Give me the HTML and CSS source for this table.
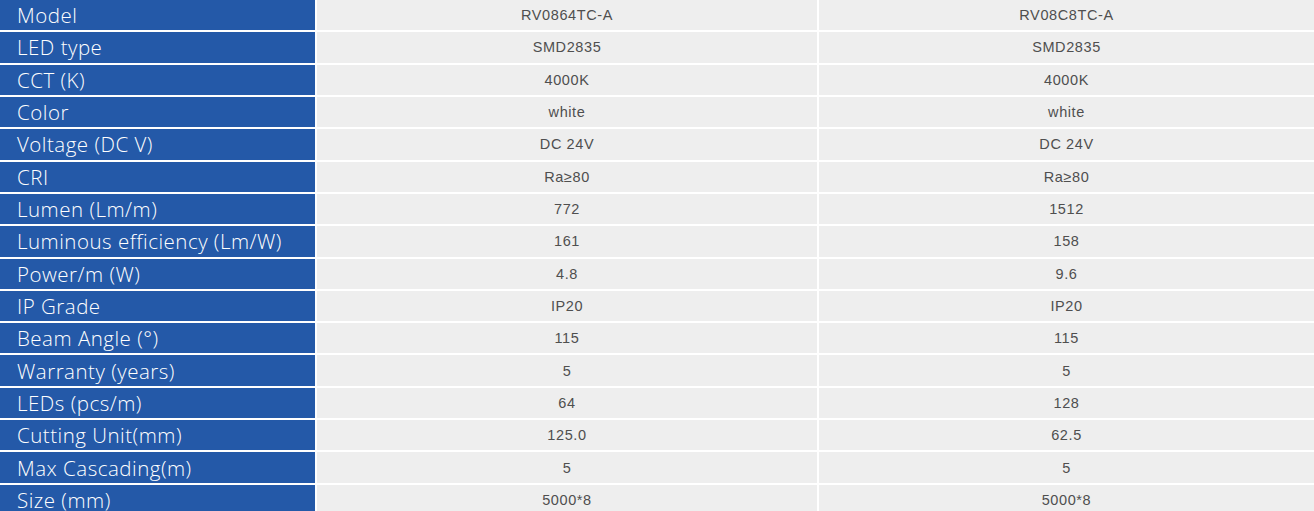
FILE: index.html
```html
<!DOCTYPE html>
<html lang="en">
<head>
<meta charset="utf-8">
<title>Specifications</title>
<link rel="stylesheet" href="styles.css">
</head>
<body>
<div class="spec-table">
  <div class="label">Model</div><div class="val">RV0864TC-A</div><div class="val">RV08C8TC-A</div>
  <div class="label">LED type</div><div class="val">SMD2835</div><div class="val">SMD2835</div>
  <div class="label">CCT (K)</div><div class="val">4000K</div><div class="val">4000K</div>
  <div class="label">Color</div><div class="val">white</div><div class="val">white</div>
  <div class="label">Voltage (DC V)</div><div class="val">DC 24V</div><div class="val">DC 24V</div>
  <div class="label">CRI</div><div class="val">Ra≥80</div><div class="val">Ra≥80</div>
  <div class="label">Lumen (Lm/m)</div><div class="val">772</div><div class="val">1512</div>
  <div class="label">Luminous efficiency (Lm/W)</div><div class="val">161</div><div class="val">158</div>
  <div class="label">Power/m (W)</div><div class="val">4.8</div><div class="val">9.6</div>
  <div class="label">IP Grade</div><div class="val">IP20</div><div class="val">IP20</div>
  <div class="label">Beam Angle (°)</div><div class="val">115</div><div class="val">115</div>
  <div class="label">Warranty (years)</div><div class="val">5</div><div class="val">5</div>
  <div class="label">LEDs (pcs/m)</div><div class="val">64</div><div class="val">128</div>
  <div class="label">Cutting Unit(mm)</div><div class="val">125.0</div><div class="val">62.5</div>
  <div class="label">Max Cascading(m)</div><div class="val">5</div><div class="val">5</div>
  <div class="label">Size (mm)</div><div class="val">5000*8</div><div class="val">5000*8</div>
</div>
</body>
</html>
```

FILE: styles.css
```css
html, body {
  margin: 0;
  padding: 0;
  background: #ffffff;
}

.spec-table {
  display: grid;
  grid-template-columns: 315px 500px 1fr;
  grid-auto-rows: 30.32px;
  gap: 2px;
}

.label {
  background: #2459a8;
  color: #ffffff;
  font-family: "Open Sans", "Noto Sans", sans-serif;
  font-weight: 300;
  font-size: 20.5px;
  letter-spacing: 0.5px;
  padding-left: 17px;
  display: flex;
  align-items: center;
  white-space: nowrap;
}

.val {
  background: #eeeeee;
  color: #4f4f4f;
  font-family: "Liberation Sans", Arial, sans-serif;
  font-size: 14.5px;
  letter-spacing: 0.6px;
  display: flex;
  align-items: center;
  justify-content: center;
}
```
